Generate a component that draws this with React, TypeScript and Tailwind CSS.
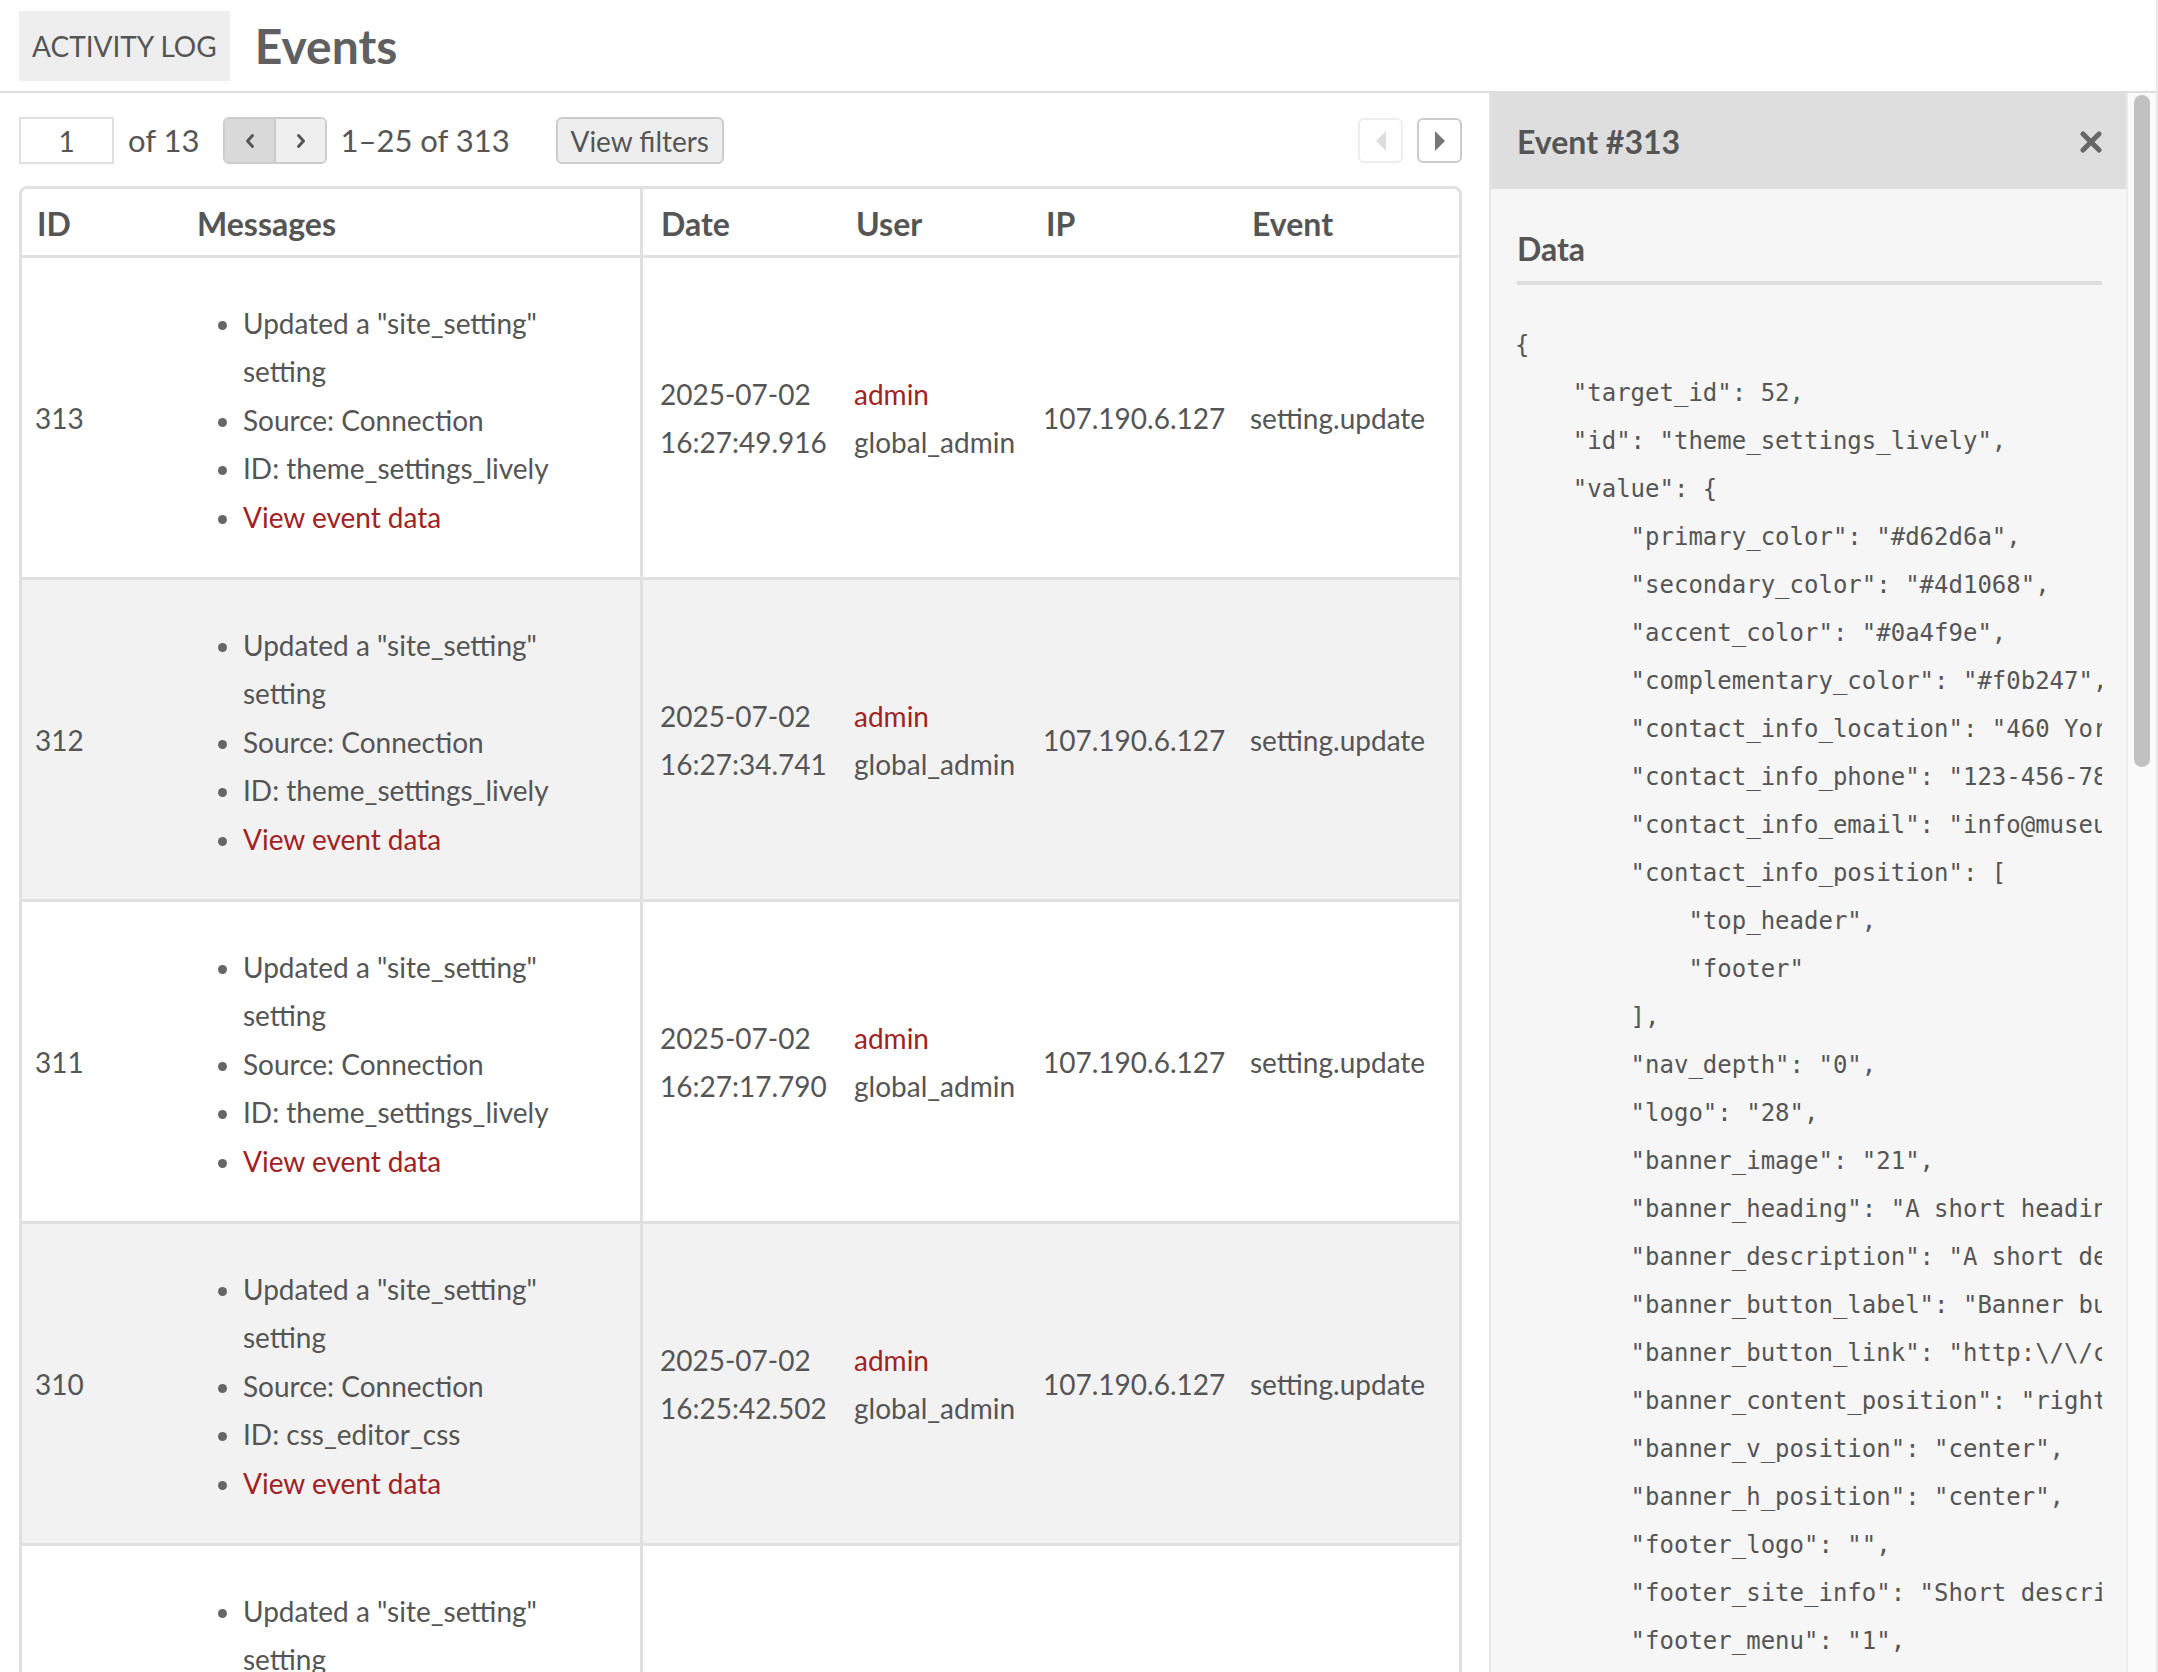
import React from 'react';

const rows = [
  { id: 313, date: '2025-07-02', time: '16:27:49.916', target: 'theme_settings_lively' },
  { id: 312, date: '2025-07-02', time: '16:27:34.741', target: 'theme_settings_lively' },
  { id: 311, date: '2025-07-02', time: '16:27:17.790', target: 'theme_settings_lively' },
  { id: 310, date: '2025-07-02', time: '16:25:42.502', target: 'css_editor_css' },
  { id: 309, date: '2025-07-02', time: '16:25:11.204', target: 'theme_settings_lively' },
];

const json = [
  '{',
  '    "target_id": 52,',
  '    "id": "theme_settings_lively",',
  '    "value": {',
  '        "primary_color": "#d62d6a",',
  '        "secondary_color": "#4d1068",',
  '        "accent_color": "#0a4f9e",',
  '        "complementary_color": "#f0b247",',
  '        "contact_info_location": "460 York Street, Springfield",',
  '        "contact_info_phone": "123-456-7890",',
  '        "contact_info_email": "info@museum.org",',
  '        "contact_info_position": [',
  '            "top_header",',
  '            "footer"',
  '        ],',
  '        "nav_depth": "0",',
  '        "logo": "28",',
  '        "banner_image": "21",',
  '        "banner_heading": "A short heading",',
  '        "banner_description": "A short description of the site",',
  '        "banner_button_label": "Banner button",',
  '        "banner_button_link": "http:\\/\\/cms.example.com",',
  '        "banner_content_position": "right",',
  '        "banner_v_position": "center",',
  '        "banner_h_position": "center",',
  '        "footer_logo": "",',
  '        "footer_site_info": "Short description",',
  '        "footer_menu": "1",',
  '        "footer_social": "1"',
  '    }',
  '}',
];

const cols = 'grid grid-cols-[159px_462px_196px_190px_206px_1fr]';

export default function App() {
  return (
    <div className="flex h-[1672px] flex-col overflow-hidden border-r-2 border-[#e8e8e8] bg-white font-['Lato',sans-serif] text-[#555]">
      {/* Header */}
      <header className="flex h-[93px] shrink-0 items-center gap-[25px] border-b-2 border-[#dedede] pl-[19px]">
        <div className="flex h-[70px] items-center bg-[#eeeeee] px-[13px] text-[28px] uppercase text-[#555]">
          Activity Log
        </div>
        <h1 className="text-[48px] font-bold leading-none text-[#606060]">Events</h1>
      </header>

      <div className="flex min-h-0 flex-1">
        {/* Main list */}
        <main className="w-[1489px] shrink-0 overflow-hidden pl-[19px] pr-[27px] pt-[24px]">
          <div className="flex h-[47px] items-center justify-between">
            <div className="flex items-center">
              <input
                readOnly
                value="1"
                className="h-[47px] w-[95px] border-2 border-[#e0e0e0] bg-white text-center text-[28px] text-[#555] outline-none"
              />
              <span className="ml-[14px] text-[31px]">of 13</span>
              <div className="ml-[24px] flex h-[47px] w-[104px] overflow-hidden rounded-md border-2 border-[#cccccc]">
                <button className="flex flex-1 items-center justify-center border-r-2 border-[#cccccc] bg-[#d9d9d9]">
                  <svg width="10" height="16" viewBox="0 0 10 16" fill="none" stroke="#555" strokeWidth="3" strokeLinecap="round" strokeLinejoin="round">
                    <polyline points="7.5,2.5 2.5,8 7.5,13.5" />
                  </svg>
                </button>
                <button className="flex flex-1 items-center justify-center bg-[#efefef]">
                  <svg width="10" height="16" viewBox="0 0 10 16" fill="none" stroke="#555" strokeWidth="3" strokeLinecap="round" strokeLinejoin="round">
                    <polyline points="2.5,2.5 7.5,8 2.5,13.5" />
                  </svg>
                </button>
              </div>
              <span className="ml-[13px] text-[31px]">1–25 of 313</span>
              <button className="ml-[46px] flex h-[47px] w-[168px] items-center justify-center rounded-md border-2 border-[#cccccc] bg-[#eeeeee] text-[28px] text-[#555]">
                View filters
              </button>
            </div>
            <div className="flex items-center gap-[14px]">
              <button className="flex h-[45px] w-[45px] items-center justify-center rounded-md border-2 border-[#eeeeee] bg-white">
                <svg width="10" height="20" viewBox="0 0 10 20">
                  <polygon points="10,0 0,10 10,20" fill="#dddddd" />
                </svg>
              </button>
              <button className="flex h-[45px] w-[45px] items-center justify-center rounded-md border-2 border-[#cccccc] bg-white">
                <svg width="10" height="20" viewBox="0 0 10 20">
                  <polygon points="0,0 10,10 0,20" fill="#777777" />
                </svg>
              </button>
            </div>
          </div>

          {/* Table */}
          <div className="mt-[22px] overflow-hidden rounded-t-lg border-[3px] border-[#e0e0e0]">
            <div className={`${cols} h-[69px] border-b-[3px] border-[#e0e0e0] pt-[4px] text-[32px] font-bold text-[#555]`}>
              <div className="flex items-center pl-[15px]">ID</div>
              <div className="-mt-[4px] flex items-center border-r-[3px] border-[#e0e0e0] pl-[16px] pt-[4px]">Messages</div>
              <div className="flex items-center pl-[18px]">Date</div>
              <div className="flex items-center pl-[17px]">User</div>
              <div className="flex items-center pl-[17px]">IP</div>
              <div className="flex items-center pl-[17px]">Event</div>
            </div>
            {rows.map((r, i) => (
              <div
                key={r.id}
                className={`${cols} h-[322px] border-b-[3px] border-[#e0e0e0] text-[28px] leading-[48px] ${i % 2 === 1 ? 'bg-[#f2f2f2]' : 'bg-white'}`}
              >
                <div className="flex items-center pl-[13px]">{r.id}</div>
                <div className="flex items-center border-r-[3px] border-[#e0e0e0] pl-[16px] pr-[16px] pt-[5px]">
                  <ul className="list-disc pl-[46px] leading-[48.6px] marker:text-[#666]">
                    <li>Updated a "site_setting" setting</li>
                    <li>Source: Connection</li>
                    <li>ID: {r.target}</li>
                    <li>
                      <a className="text-[#a02222]">View event data</a>
                    </li>
                  </ul>
                </div>
                <div className="flex flex-col justify-center pl-[17px]">
                  <span>{r.date}</span>
                  <span>{r.time}</span>
                </div>
                <div className="flex flex-col justify-center pl-[15px]">
                  <a className="text-[#a02222]">admin</a>
                  <span>global_admin</span>
                </div>
                <div className="flex items-center pl-[14px]">107.190.6.127</div>
                <div className="flex items-center pl-[15px]">setting.update</div>
              </div>
            ))}
          </div>
        </main>

        {/* Event detail panel */}
        <aside className="flex w-[637px] shrink-0 flex-col border-l-2 border-[#e6e6e6] bg-[#f6f6f6]">
          <div className="flex h-[96px] shrink-0 items-center justify-between bg-[#dedede] pl-[26px] pr-[24px] pt-[2px]">
            <h2 className="text-[32px] font-bold text-[#555]">Event #313</h2>
            <button className="flex h-[22px] w-[22px] items-center justify-center">
              <svg width="22" height="22" viewBox="0 0 22 22" stroke="#666" strokeWidth="5" strokeLinecap="round">
                <line x1="3" y1="3" x2="19" y2="19" />
                <line x1="19" y1="3" x2="3" y2="19" />
              </svg>
            </button>
          </div>
          <div className="min-h-0 flex-1 overflow-hidden pl-[26px] pr-[24px] pt-[41px]">
            <h3 className="border-b-4 border-[#dddddd] pb-[13px] text-[32px] font-bold leading-[38px] text-[#555]">Data</h3>
            <pre className="-ml-[2px] mt-[36px] overflow-hidden whitespace-pre font-['DejaVu_Sans_Mono',monospace] text-[24px] leading-[48px] text-[#555]">
              {json.join('\n')}
            </pre>
          </div>
        </aside>

        {/* Panel scrollbar */}
        <div className="w-[30px] shrink-0 border-l-2 border-[#ececec] bg-[#fafafa] pl-[6px] pt-[2px]">
          <div className="h-[672px] w-[16px] rounded-full bg-[#c1c1c1]" />
        </div>
      </div>
    </div>
  );
}
